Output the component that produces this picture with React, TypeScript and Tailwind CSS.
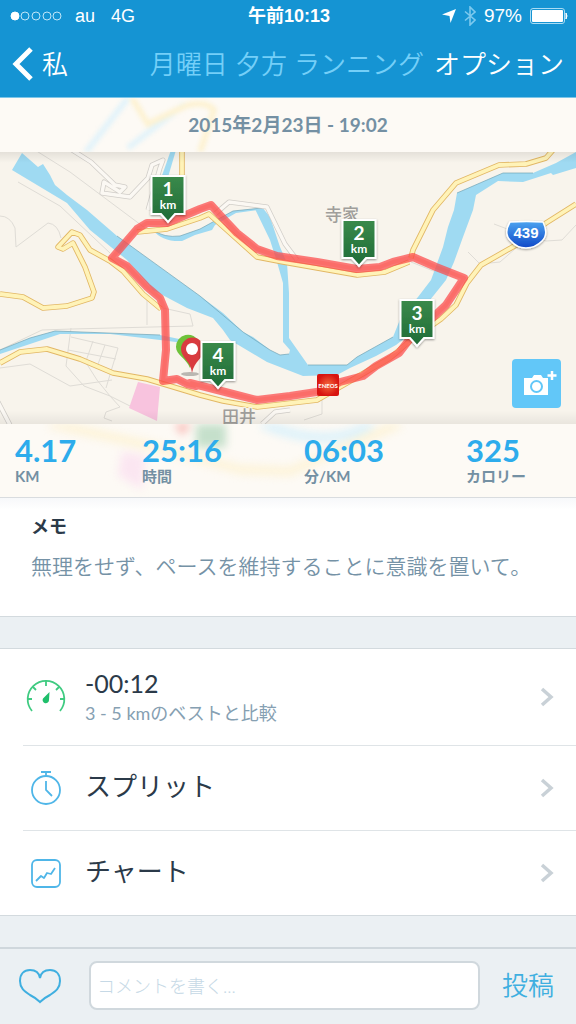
import type { ReactNode } from "react";

const STATS = [
  { value: "4.17", label: "KM" },
  { value: "25:16", label: "時間" },
  { value: "06:03", label: "分/KM" },
  { value: "325", label: "カロリー" },
];

const MARKERS = [
  { km: 1, x: 168, y: 74 },
  { km: 2, x: 359, y: 118 },
  { km: 3, x: 417, y: 198 },
  { km: 4, x: 218, y: 240 },
];

const YELLOW_ROADS = [
  "M0 144L23 147L43 158L67 156L92 148L94 142L85 117L73 93L63 99L58 97L72 82L80 85L90 100L110 111L123 121L143 144L161 159",
  "M0 213L20 202L47 199L80 209L113 223L147 229L200 245L223 251L257 257L317 250L345 234L390 208L411 190L441 169L456 155L467 133L481 115L516 95L546 73L576 54",
  "M411 108L413 100L423 80L433 60L456 33L499 15L526 14L546 8L553 0",
  "M137 82L167 79L200 68L209 64L257 107L283 112L357 125L385 122L409 112",
  "M182 0L182 30",
];

const GREY_ROADS = [
  "M18 32L60 56L110 103",
  "M35 0L70 22L145 78",
  "M0 66Q10 66 15 78L16 97L48 73Q58 74 61 88",
  "M0 200L42 180L72 179L193 176L190 164L163 158",
  "M147 150L147 175",
  "M71 178L66 216L84 236L110 246L120 257L106 262L104 268L112 271",
  "M71 187L118 198L106 238",
  "M93 191L86 211M105 195L97 217M68 200L116 209",
  "M0 218L30 214L70 236L112 230",
  "M83 208L97 230L110 246L138 260",
  "M322 249L322 264L304 270",
  "M494 74L510 80L546 91L562 90L576 75",
  "M468 102L480 114L500 112L516 98",
  "M411 112L446 126",
];

const WHITE_ROADS = [
  "M72 0L91 12L115 35L125 37L120 42L104 32L102 43L130 47L148 28L152 15L163 10L160 18L148 60",
  "M215 64L229 52L267 57L285 94L297 110",
  "M-2 252L10 275M262 274L275 262L290 260",
];

const ROUTE =
  "M196 236L187 234L177 229L163 231L166 200L165 160L160 148L147 137L127 116L112 108L137 79L147 73L167 73L200 59L211 55L220 65L237 83L257 99L277 106L317 112L357 119L380 117L393 112L413 107L436 117L464 128L446 155L409 190L399 203L376 216L363 226L340 232L323 241L290 246L257 250L233 244L190 233";

function StatusBar() {
  return (
    <div className="grid h-8 grid-cols-3 items-center pl-[10px] pr-2">
      <div className="flex items-center gap-4 font-['Liberation_Sans',sans-serif] text-[18px]">
        <svg width="53" height="10" viewBox="0 0 53 10" fill="none" stroke="#bfe6f8" aria-hidden="true">
          <circle cx="5" cy="5" r="4" fill="#fff" stroke="#fff" />
          <circle cx="15" cy="5" r="4" />
          <circle cx="26" cy="5" r="4" />
          <circle cx="37" cy="5" r="4" />
          <circle cx="47" cy="5" r="4" />
        </svg>
        <span className="-ml-1">au</span>
        <span>4G</span>
      </div>
      <div className="text-center font-['Liberation_Sans','Noto_Sans_CJK_JP',sans-serif] text-[18px] font-bold">
        午前10:13
      </div>
      <div className="flex items-center justify-end gap-2 font-['Liberation_Sans',sans-serif] text-[19px]">
        <svg width="14" height="14" viewBox="0 0 14 14" fill="#fff" aria-hidden="true">
          <path d="M14 0L8.500 14L7.500 7L0 5.500Z" />
        </svg>
        <svg width="12" height="20" viewBox="0 0 12 20" fill="none" stroke="#7cc9ee" strokeWidth="1.600" aria-hidden="true">
          <path d="M1 5.500L11 14L6 19V1L11 6L1 14.500" />
        </svg>
        <span>97%</span>
        <svg width="38" height="16" viewBox="0 0 38 16" fill="none" aria-hidden="true">
          <rect x="0.500" y="0.500" width="34" height="15" rx="2.500" stroke="#a9dcf4" />
          <rect x="2" y="2" width="31" height="12" rx="1" fill="#fff" />
          <path d="M36 5Q38 8 36 11Z" fill="#fff" stroke="#fff" />
        </svg>
      </div>
    </div>
  );
}

function KmMarker({ km, x, y }: { km: number; x: number; y: number }) {
  return (
    <g transform={`translate(${x} ${y})`}>
      <path
        d="M-16.500 -48H16.500V-10H7L0 -2L-7 -10H-16.500Z"
        fill="url(#marker)"
        stroke="#fff"
        strokeWidth="2"
        filter="url(#drop)"
      />
      <text y="-28" textAnchor="middle" fill="#fff" fontSize="19" fontWeight="700">
        {km}
      </text>
      <text y="-15" textAnchor="middle" fill="#fff" fontSize="12" fontWeight="700">
        km
      </text>
    </g>
  );
}

function RouteMap() {
  return (
    <svg
      viewBox="0 2 576 272"
      preserveAspectRatio="xMidYMid slice"
      className="block h-[272px] w-full bg-[#f8f4ec] font-['Lato','Noto_Sans_CJK_JP',sans-serif]"
      role="img"
      aria-label="ランニングコース"
    >
      <defs>
        <linearGradient id="marker" x1="0" y1="0" x2="0" y2="1">
          <stop offset="0" stopColor="#3a8a4b" />
          <stop offset="1" stopColor="#1f6b37" />
        </linearGradient>
        <linearGradient id="shield" x1="0" y1="0" x2="0" y2="1">
          <stop offset="0" stopColor="#4ba3f0" />
          <stop offset="1" stopColor="#1048c8" />
        </linearGradient>
        <linearGradient id="edge" x1="0" y1="0" x2="0" y2="1">
          <stop offset="0" stopColor="#000" stopOpacity="0.080" />
          <stop offset="0.040" stopColor="#000" stopOpacity="0" />
          <stop offset="0.950" stopColor="#000" stopOpacity="0" />
          <stop offset="1" stopColor="#000" stopOpacity="0.060" />
        </linearGradient>
        <radialGradient id="station">
          <stop offset="0" stopColor="#f4693c" />
          <stop offset="1" stopColor="#d81410" />
        </radialGradient>
        <filter id="drop" x="-30%" y="-30%" width="160%" height="160%">
          <feDropShadow dx="0" dy="1" stdDeviation="1" floodOpacity="0.400" />
        </filter>
      </defs>

      <g fill="none" stroke="#dfdcd6" strokeWidth="1">
        {GREY_ROADS.map((d) => (
          <path key={d} d={d} />
        ))}
      </g>
      <path d="M138 232L160 237L157 271L129 258Z" fill="#f8c3de" />

      {/* river and its side channels */}
      <g fill="#9fdaf2">
        <path d="M22 3L38 17L43 14L50 25L55 35L67 45L87 60L117 86L150 110L200 146L223 163L243 182L253 187L270 200L280 205L289 204L290 200L283 192L283 133L277 112L270 90L255 59L262 57L270 67L280 97L287 113L289 143L289 188L308 215L347 215L357 207L393 187L401 167L418 147L431 130L443 97L448 77L454 60L457 43L503 23L533 23L556 13L576 2V18L553 25L551 23L523 32L498 31L476 45L473 60L463 87L454 112L446 130L426 155L409 185L396 195L376 206L350 218L337 225L303 226L267 212L230 190L223 180L213 168L187 158L153 140L127 110L90 80L67 53L12 20Z" />
        <path d="M153 80Q164 88 180 86L200 79L233 61L262 58L258 60L236 63L215 75L212 80L195 85L182 91Q162 92 153 80Z" />
        <path d="M0 200L30 188L55 181L160 185L184 190V193L160 190L110 184L60 184L30 194L0 204Z" />
        <path d="M171 0H176L166 34H159Z" />
      </g>
      <g fill="none" stroke="#71a3b5" strokeWidth="0.700">
        <path d="M117 86L200 146L243 182L270 200L280 205L289 204" />
        <path d="M308 215L347 215L357 207L393 187M457 43L503 23L533 23" />
        <path d="M153 80Q164 88 180 86L200 79L233 61L262 58M0 200L30 188L55 181L160 185" />
      </g>

      <g fill="none" strokeLinejoin="round">
        <g stroke="#d0cdc8" strokeWidth="5">
          {WHITE_ROADS.map((d) => (
            <path key={d} d={d} />
          ))}
        </g>
        <g stroke="#fbf8f3" strokeWidth="3.500">
          {WHITE_ROADS.map((d) => (
            <path key={d} d={d} />
          ))}
        </g>
        <g stroke="#e2b765" strokeWidth="5.500">
          {YELLOW_ROADS.map((d) => (
            <path key={d} d={d} />
          ))}
        </g>
        <g stroke="#fff3b8" strokeWidth="3.800">
          {YELLOW_ROADS.map((d) => (
            <path key={d} d={d} />
          ))}
        </g>
      </g>

      <g fill="#a09e9b" stroke="#f8f4ec" strokeWidth="2" paintOrder="stroke" fontSize="17" fontWeight="500">
        <text x="325" y="71">寺家</text>
        <text x="222" y="273">田井</text>
      </g>

      <path d={ROUTE} fill="none" stroke="#fc4a4a" strokeOpacity="0.720" strokeWidth="8" strokeLinejoin="round" strokeLinecap="round" />
      <path d={ROUTE} fill="none" stroke="#fb4a40" strokeOpacity="0.250" strokeWidth="4" strokeLinejoin="round" />

      {/* start and finish pins */}
      <ellipse cx="190" cy="224" rx="9" ry="2" fill="#000" opacity="0.250" />
      <path d="M190 218C186 208 176 205 176 197A12 12 0 0 1 199 192Z" fill="#6fc23a" />
      <path d="M192 223C191 211 181 208 181 199A11.500 11.500 0 0 1 204 199C204 208 194 211 192 223Z" fill="#d93b3f" />
      <circle cx="192" cy="199" r="6" fill="#fff" />

      <g>
        <rect x="317" y="224" width="22" height="22" rx="2" fill="url(#station)" />
        <text x="328" y="238" textAnchor="middle" fill="#fff" fontSize="6" fontWeight="700">ENEOS</text>
      </g>

      <g filter="url(#drop)">
        <path d="M510 72Q527 71 543 72Q549 84 542 91Q535 98 526 98Q517 98 511 91Q503 84 510 72Z" fill="url(#shield)" stroke="#fff" strokeWidth="1.500" />
      </g>
      <text x="526" y="88" textAnchor="middle" fill="#fff" fontSize="15" fontWeight="700" className="font-['Liberation_Sans',sans-serif]">
        439
      </text>

      {MARKERS.map((m) => (
        <KmMarker key={m.km} {...m} />
      ))}
      <rect y="2" width="576" height="272" fill="url(#edge)" />
    </svg>
  );
}

function Chevron() {
  return (
    <svg width="14" height="20" viewBox="0 0 14 20" fill="none" stroke="#c9d1d7" strokeWidth="3.500" aria-hidden="true">
      <path d="M2 2L11 10L2 18" />
    </svg>
  );
}

function GaugeIcon() {
  return (
    <svg width="40" height="34" viewBox="0 0 40 34" fill="none" stroke="#3fcb81" strokeWidth="1.800" aria-hidden="true">
      <path d="M6 31A18.300 18.300 0 1 1 34 31" />
      <path d="M20 1V6M2 19H6M34 19H38M7 7L10 10M33 7L30 10" />
      <path d="M23.500 12L23 20A3.200 3.200 0 1 1 17 18.500Z" fill="#1fbf6b" stroke="none" />
    </svg>
  );
}

function StopwatchIcon() {
  return (
    <svg width="32" height="36" viewBox="0 0 32 36" fill="none" stroke="#4fb6e8" strokeWidth="1.800" aria-hidden="true">
      <circle cx="16" cy="20" r="14" />
      <path d="M11 2H21M16 2V6M16 11V20L22 26" />
    </svg>
  );
}

function ChartIcon() {
  return (
    <svg width="32" height="32" viewBox="0 0 32 32" fill="none" stroke="#4fb6e8" strokeWidth="1.800" aria-hidden="true">
      <rect x="2" y="3" width="28" height="27" rx="5" />
      <path d="M6 24L11 19L14 21L17 16L21 17L25 11" strokeLinejoin="round" />
    </svg>
  );
}

function Row({ icon, title, detail }: { icon: ReactNode; title: string; detail?: string }) {
  return (
    <li className="border-b border-[#dfe4e7] last:border-b-0">
      <a href="#" className={detail ? "flex h-24 items-center pr-[22px]" : "flex h-[84px] items-center pr-[22px]"}>
        <span className="flex w-[46px] justify-center">{icon}</span>
        <span className={detail ? "ml-4 flex-1" : "ml-4 flex-1 pb-1"}>
          <span className={detail ? "block text-[25px] leading-8 text-[#2b3a49]" : "block text-[26px] leading-8 text-[#2b3a49]"}>
            {title}
          </span>
          {detail && <span className="block text-[18px] leading-7 text-[#86a0b2]">{detail}</span>}
        </span>
        <Chevron />
      </a>
    </li>
  );
}

export default function App() {
  return (
    <div className="flex min-h-screen flex-col bg-[#ebf0f3] font-['Lato','Noto_Sans_CJK_JP',sans-serif]">
      <header className="h-[98px] border-b border-[#7cc5e8] bg-[#1594d3] text-white">
        <StatusBar />
        <nav className="flex h-16 items-center px-3 text-[26px] font-[350]">
          <button type="button" className="flex items-center gap-2">
            <svg width="22" height="34" viewBox="0 0 22 34" fill="none" stroke="#fff" strokeWidth="5" aria-hidden="true">
              <path d="M19 2L4 17L19 32" />
            </svg>
            私
          </button>
          <h1 className="min-w-0 flex-1 truncate pr-[10px] text-right text-[#74cff8]">月曜日 夕方 ランニング</h1>
          <button type="button">オプション</button>
        </nav>
      </header>

      <section>
        <div className="relative flex h-[54px] items-center justify-center overflow-hidden bg-[#fdfaf5]">
          <svg className="absolute inset-0 h-full w-full blur-[2px]" viewBox="0 0 576 54" preserveAspectRatio="xMidYMid slice" fill="none" strokeWidth="6" aria-hidden="true">
            <path d="M128 0L86 54M128 50L185 6" stroke="#e2f3fa" />
            <path d="M132 0L148 26L185 8Q205 2 214 12L200 54" stroke="#fdf2d2" />
          </svg>
          <time dateTime="2015-02-23T19:02" className="relative text-[19px] font-bold text-[#7490a3]">
            2015年2月23日 - 19:02
          </time>
        </div>

        <div className="relative">
          <RouteMap />
          <button
            type="button"
            aria-label="写真を追加"
            className="absolute bottom-4 right-[15px] flex size-[49px] items-center justify-center rounded-[4px] bg-[#62c7f8]"
          >
            <svg width="49" height="49" viewBox="0 0 49 49" aria-hidden="true">
              <path d="M12 19H20L22 16H29L31 19H36V36H12Z" fill="#fff" />
              <circle cx="24.500" cy="27.500" r="5.500" fill="none" stroke="#62c7f8" strokeWidth="2" />
              <path d="M40 12V21M35.500 16.500H44.500" stroke="#fff" strokeWidth="2.500" />
            </svg>
          </button>
        </div>

        <div className="relative h-[74px] overflow-hidden border-b border-[#d9dcdf] bg-[#fdfaf5]">
          <svg className="absolute inset-0 h-full w-full blur-[4px]" viewBox="0 0 576 74" preserveAspectRatio="xMidYMid slice" aria-hidden="true">
            <path d="M50 0L150 22L240 46L290 48L400 0" fill="none" stroke="#fdf3d8" strokeWidth="9" />
            <path d="M262 0Q330 28 372 0" fill="none" stroke="#daf1fb" strokeWidth="9" />
            <path d="M122 28L146 32L142 66L118 52Z" fill="#fbe6f1" />
            <path d="M174 0H192L182 12Z" fill="#f8b9b4" />
            <path d="M196 0H226V24H196Z" fill="#c5e0cb" />
          </svg>
          <dl className="relative grid grid-cols-[127fr_162fr_162fr_110fr] pl-[15px] pt-[10px]">
            {STATS.map((s) => (
              <div key={s.label} className="flex flex-col-reverse">
                <dt className="text-[15px] font-bold leading-5 text-[#7490a3]">{s.label}</dt>
                <dd className="text-[31px] font-bold leading-8 text-[#2dacec]">{s.value}</dd>
              </div>
            ))}
          </dl>
        </div>
      </section>

      <section className="h-[119px] border-b border-[#d3dade] bg-white bg-linear-to-b from-[#f7f8fa] to-white to-10% px-[31px] pt-[14px]">
        <h2 className="text-[18px] font-bold leading-7 text-[#2b3a49]">メモ</h2>
        <p className="mt-[10px] text-[21px] font-[350] leading-8 text-[#7592a6]">無理をせず、ペースを維持することに意識を置いて。</p>
      </section>

      <ul className="mt-[31px] border-y border-[#d3dade] bg-white pl-[23px]">
        <Row icon={<GaugeIcon />} title="-00:12" detail="3 - 5 kmのベストと比較" />
        <Row icon={<StopwatchIcon />} title="スプリット" />
        <Row icon={<ChartIcon />} title="チャート" />
      </ul>

      <form className="mt-auto flex h-[77px] items-center border-t-2 border-[#cfd7dc] pb-[2px] pl-[18px] pr-[22px]" onSubmit={(e) => e.preventDefault()}>
        <button type="button" aria-label="いいね">
          <svg width="44" height="36" viewBox="0 0 44 36" fill="none" stroke="#3fafe0" strokeWidth="2" aria-hidden="true">
            <path d="M22 10C21 4 17 2 12 2C6 2 2 6 2 13C2 20 6 23 12 27C16 29 20 32 22 34C24 32 28 29 32 27C38 23 42 20 42 13C42 6 38 2 32 2C27 2 23 4 22 10Z" />
          </svg>
        </button>
        <input
          type="text"
          aria-label="コメント"
          placeholder="コメントを書く..."
          className="ml-[27px] h-[49px] min-w-0 flex-1 rounded-lg border-2 border-[#d0d8dd] bg-white px-[6px] text-[18px] font-light placeholder:text-[#c6d9e6]"
        />
        <button type="submit" className="ml-[22px] text-[26px] font-[350] text-[#3fafe0]">投稿</button>
      </form>
    </div>
  );
}
